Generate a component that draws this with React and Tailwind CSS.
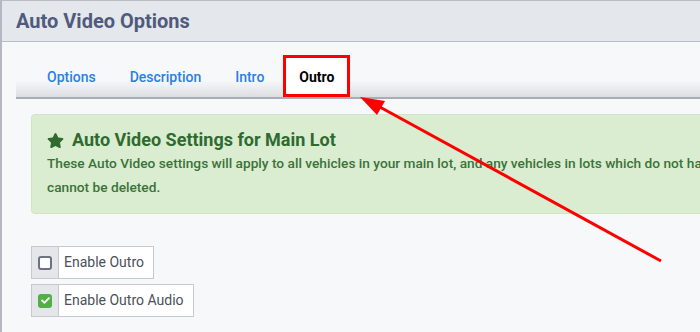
import { FaStar, FaCheck } from 'react-icons/fa'

const tabs = ['Options', 'Description', 'Intro']

export default function App() {
  return (
    <div className="relative h-[332px] w-[700px] overflow-hidden border-l-2 border-[#b3b8c2] bg-[#f7f8fa] font-['Roboto',sans-serif]">
      <div className="w-[1200px]">
        <div className="flex h-[42px] items-center border-y border-[#b9bdc5] bg-[#e4e7eb] pl-[14px]">
          <h1 className="text-[20px] font-bold text-[#4f5b7d]">Auto Video Options</h1>
        </div>

        <div className="ml-[14px] mt-[13px] flex h-[44px] items-stretch border-b-2 border-[#a9aeb6] bg-gradient-to-b from-[#f7f8fa] from-60% to-[#dcdee2] pl-[14px]">
          {tabs.map(t => (
            <div key={t} className="flex items-center px-[17px] pt-[3px] text-[14px] font-medium text-[#2a7fe6]">{t}</div>
          ))}
          <div className="ml-[2px] flex items-center border-[3px] border-[#ff0000] bg-white px-[13px] pt-[3px] text-[14px] font-bold text-black">Outro</div>
        </div>

        <div className="pl-[29px] pt-[15px]">
          <div className="w-[1100px] rounded border border-[#cfe6c1] bg-[#daedd0] px-[15px] pb-[14px] pt-[15px]">
            <div className="flex items-center gap-[8px] text-[18px] font-bold leading-[20px] text-[#2f6a2f]">
              <FaStar className="h-[17px] w-[17px]" />
              <span>Auto Video Settings for Main Lot</span>
            </div>
            <p className="mt-[1px] whitespace-nowrap text-[13.7px] font-medium leading-[24px] text-[#3a7339]">
              These Auto Video settings will apply to all vehicles in your main lot, and any vehicles in lots which do not have their own Auto Video settings. These settings<br />cannot be deleted.
            </p>
          </div>

          <div className="mt-[32px] flex flex-col items-start gap-[5px]">
            <div className="flex h-[33px] border border-[#c6c9ce]">
              <div className="flex w-[27px] items-center justify-center border-r border-[#c6c9ce] bg-[#e4e6ea]">
                <span className="h-[14px] w-[14px] rounded-[3px] border-2 border-[#6d7182] bg-white"></span>
              </div>
              <div className="flex items-center bg-white pl-[5px] pr-[9px] text-[14px] text-[#4b505a]">Enable Outro</div>
            </div>
            <div className="flex h-[33px] border border-[#c6c9ce]">
              <div className="flex w-[27px] items-center justify-center border-r border-[#c6c9ce] bg-[#e4e6ea]">
                <span className="flex h-[14px] w-[14px] items-center justify-center rounded-[3px] bg-[#4fb043] text-white">
                  <FaCheck className="h-[9px] w-[9px]" />
                </span>
              </div>
              <div className="flex items-center bg-white pl-[5px] pr-[9px] text-[14px] text-[#4b505a]">Enable Outro Audio</div>
            </div>
          </div>
        </div>
      </div>

      <svg className="pointer-events-none absolute left-0 top-0" width="700" height="332">
        <line x1="659" y1="261" x2="376" y2="106" stroke="#ff0000" strokeWidth="3" />
        <polygon points="358,97 383,101 375,115" fill="#ff0000" />
      </svg>
    </div>
  )
}
